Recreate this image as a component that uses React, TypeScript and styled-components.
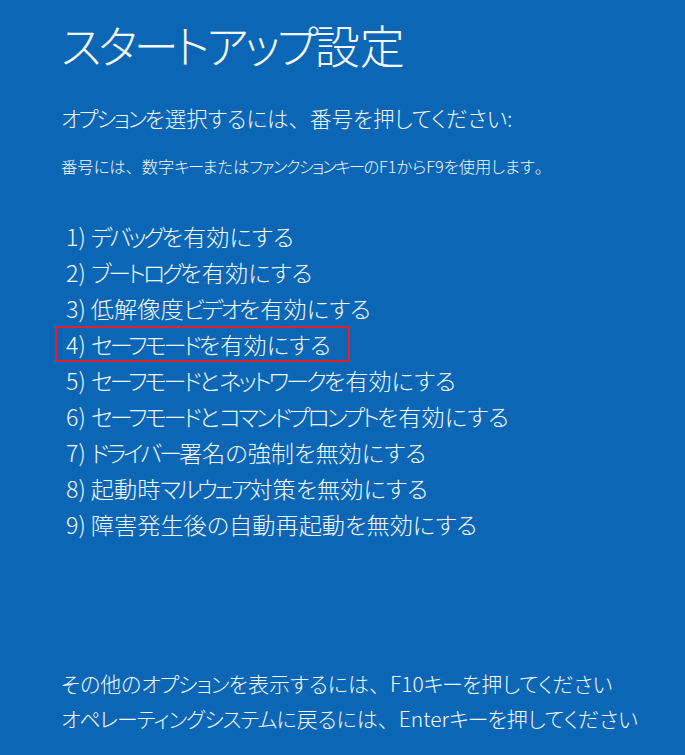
import React from "react";
import styled, { createGlobalStyle } from "styled-components";

const GlobalStyle = createGlobalStyle`
  html, body {
    margin: 0;
    padding: 0;
    background: #0b67b5;
  }
  body {
    font-family: "Noto Sans CJK JP", "Noto Sans", sans-serif;
    color: #f4f7fb;
  }
`;

const options = [
  "デバッグを有効にする",
  "ブートログを有効にする",
  "低解像度ビデオを有効にする",
  "セーフモードを有効にする",
  "セーフモードとネットワークを有効にする",
  "セーフモードとコマンドプロンプトを有効にする",
  "ドライバー署名の強制を無効にする",
  "起動時マルウェア対策を無効にする",
  "障害発生後の自動再起動を無効にする",
];

const Kata = styled.span`
  letter-spacing: var(--kata, 0);
`;

const Punct = styled.span`
  font-feature-settings: normal;
`;

const JpText = ({ text }: { text: string }) => (
  <>
    {text.split(/([\u30a0-\u30ff]+|[、。])/).map((part, i) => {
      if (!part) return null;
      if (/^[\u30a0-\u30ff]+$/.test(part)) return <Kata key={i}>{part}</Kata>;
      if (/^[、。]$/.test(part)) return <Punct key={i}>{part}</Punct>;
      return <React.Fragment key={i}>{part}</React.Fragment>;
    })}
  </>
);

const App = () => {
  return (
    <>
      <GlobalStyle />
      <Screen>
        <Title>
          <JpText text="スタートアップ設定" />
        </Title>
        <Prompt>
          <JpText text="オプションを選択するには、番号を押してください:" />
        </Prompt>
        <Note>
          <JpText text="番号には、数字キーまたはファンクションキーのF1からF9を使用します。" />
        </Note>
        <OptionList>
          {options.map((text, i) => (
            <OptionItem key={text} $selected={i === 3}>
              <JpText text={`${i + 1}) ${text}`} />
            </OptionItem>
          ))}
        </OptionList>
        <Footer>
          <FooterLine>
            <JpText text="その他のオプションを表示するには、F10キーを押してください" />
          </FooterLine>
          <FooterLine>
            <JpText text="オペレーティングシステムに戻るには、Enterキーを押してください" />
          </FooterLine>
        </Footer>
      </Screen>
    </>
  );
};

const Screen = styled.div`
  width: 685px;
  height: 755px;
  box-sizing: border-box;
  padding: 20px 0 0 61px;
  background: #0b67b5;
  display: flex;
  flex-direction: column;
  font-feature-settings: "palt";
  overflow: hidden;
`;

const Title = styled.h1`
  --kata: -0.075em;
  margin: 0;
  font-size: 45px;
  font-weight: 300;
  line-height: 50px;
  white-space: nowrap;
`;

const Prompt = styled.p`
  --kata: -0.1em;
  margin: 33px 0 0;
  font-size: 21.5px;
  font-weight: 300;
  line-height: 30px;
  white-space: nowrap;
`;

const Note = styled.p`
  --kata: -0.1em;
  margin: 21px 0 0;
  font-size: 16.3px;
  font-weight: 300;
  line-height: 24px;
  white-space: nowrap;
`;

const OptionList = styled.ol`
  list-style: none;
  margin: 40px 0 0 -6px;
  padding: 0;
  display: flex;
  flex-direction: column;
`;

const OptionItem = styled.li<{ $selected?: boolean }>`
  --kata: -0.13em;
  box-sizing: border-box;
  height: 36px;
  width: ${(p) => (p.$selected ? "295px" : "auto")};
  padding-left: ${(p) => (p.$selected ? "9px" : "11px")};
  border: ${(p) => (p.$selected ? "2px solid #e5202c" : "none")};
  font-size: 23.2px;
  font-weight: 300;
  line-height: ${(p) => (p.$selected ? "32px" : "36px")};
  white-space: nowrap;
`;

const Footer = styled.div`
  margin-top: 124px;
  display: flex;
  flex-direction: column;
`;

const FooterLine = styled.p`
  --kata: -0.05em;
  margin: 0;
  font-size: 21px;
  font-weight: 300;
  line-height: 35px;
  white-space: nowrap;
`;

export default App;
